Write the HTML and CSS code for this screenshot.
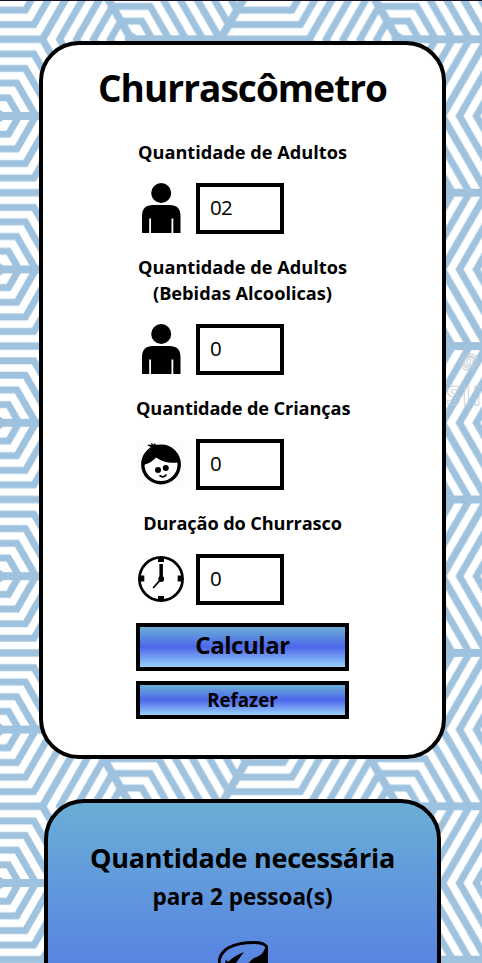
FILE: index.html
```
<!DOCTYPE html>
<html lang="pt-br">
<head>
<meta charset="utf-8">
<title>Churrascômetro</title>
<link rel="stylesheet" href="styles.css">
</head>
<body>
<svg class="backdrop" width="482" height="963" aria-hidden="true">
  <defs>
    <g id="cell" fill="none" stroke="#9fc3df">
      <g stroke-width="7">
        <path d="M88.7 0L44.3 76.7H-44.3L-88.7 0L-44.3 -76.7H44.3Z"/>
        <path d="M71.7 0L35.9 62.1H-35.9L-71.7 0L-35.9 -62.1H35.9Z"/>
        <path d="M54.8 0L27.4 47.5H-27.4L-54.8 0L-27.4 -47.5H27.4Z"/>
        <path d="M37.9 0L18.9 32.8H-18.9L-37.9 0L-18.9 -32.8H18.9Z"/>
        <path d="M21 0L10.5 18.2H-10.5L-21 0L-10.5 -18.2H10.5Z"/>
      </g>
      <path stroke-width="8" d="M0 0H88.7M0 0L-44.3 -76.7M0 0L-44.3 76.7"/>
      <circle r="6.5" fill="#9fc3df" stroke="none"/>
    </g>
    <pattern id="hex" width="266.6" height="153.4" patternUnits="userSpaceOnUse" patternTransform="translate(-2 116)">
      <use href="#cell"/>
      <use href="#cell" y="153.4"/>
      <use href="#cell" x="266.6"/>
      <use href="#cell" x="266.6" y="153.4"/>
      <use href="#cell" x="133.3" y="76.7"/>
      <use href="#cell" x="133.3" y="-76.7"/>
      <use href="#cell" x="133.3" y="230.1"/>
    </pattern>
  </defs>
  <rect width="482" height="963" fill="#fff"/>
  <rect width="482" height="963" fill="url(#hex)"/>
  <g class="watermark">
    <text x="459" y="369" font-size="22">@</text>
    <text x="446" y="405" font-size="26" textLength="35">SII</text>
  </g>
  <rect width="482" height="1" fill="#1b1020"/>
</svg>

<main class="page">
  <section class="card form-card">
    <h1>Churrascômetro</h1>
    <form class="form">
      <label>Quantidade de Adultos</label>
      <div class="row">
        <svg class="icon" viewBox="0 0 50 50"><use href="#person"/></svg>
        <input type="text" value="02">
      </div>
      <label>Quantidade de Adultos<br>(Bebidas Alcoolicas)</label>
      <div class="row">
        <svg class="icon" viewBox="0 0 50 50">
          <g id="person">
            <circle cx="25.2" cy="10" r="10"/>
            <path d="M6 50V33Q6 22 17 22H33.500Q44.500 22 44.500 33V50H37.300V35.500H35.500V50H15V35.500H13.200V50Z"/>
          </g>
        </svg>
        <input type="text" value="0">
      </div>
      <label class="tight">Quantidade de Crianças</label>
      <div class="row">
        <svg class="icon" viewBox="0 0 50 50">
          <rect x="1" y="1" width="48" height="48" fill="#fcfcfc"/>
          <circle cx="25" cy="25.500" r="18.200" fill="#fff" stroke="#000" stroke-width="3.400"/>
          <path d="M6 27Q6 13 15 8.500Q13 6.500 11 6.500Q13 5 15.500 6L15 4Q17 4.500 18 6L18.500 4Q20 6 21.500 6.500Q35 4 41.500 15Q44 20 43.500 23Q31 26 20 18.500Q15 24 9 25.500Z"/>
          <circle cx="22" cy="31" r="3"/><circle cx="29.800" cy="29" r="3"/>
          <path d="M23.500 36.500Q27.500 39.500 30.500 35.500" fill="none" stroke="#000" stroke-width="1.600"/>
        </svg>
        <input type="text" value="0">
      </div>
      <label class="tight">Duração do Churrasco</label>
      <div class="row">
        <svg class="icon" viewBox="0 0 50 50">
          <circle cx="25" cy="25" r="21.600" fill="none" stroke="#000" stroke-width="2.700"/>
          <path d="M22 4h6v4h-6zM22 42h6v4h-6zM4 21.500h4.300v6H4zM41.700 21.500H46v6h-4.300zM23.400 10h3.500v13h-3.500z"/>
          <circle cx="25.200" cy="25" r="2.900"/>
          <path d="M25 25L17.200 34" stroke="#000" stroke-width="1.900"/>
        </svg>
        <input type="text" value="0">
      </div>
      <button type="button" class="calc">Calcular</button>
      <button type="button" class="reset">Refazer</button>
    </form>
  </section>

  <section class="card result-card">
    <h2>Quantidade necessária</h2>
    <h3>para 2 pessoa(s)</h3>
    <svg class="meat" width="50" height="50" viewBox="0 0 50 50">
      <path d="M1.500 27Q-1 14 10 7Q20 1.500 36 1.500Q46 1.500 48.700 6V13Q38 17 31 26" fill="none" stroke="#000" stroke-width="3"/>
      <path d="M50 4V28H28Q29 22 36 17Q45 14 46 9Z"/>
      <path d="M6 27L8 18.500L10 21Q16 15 26 11Q19 20 15 27Z"/>
    </svg>
  </section>
</main>
</body>
</html>
```
FILE: styles.css
```
* { box-sizing: border-box; }

body {
  margin: 0;
  height: 963px;
  overflow: hidden;
  font-family: "Open Sans", "Noto Sans", sans-serif;
  color: #000;
}

.backdrop {
  position: absolute;
  inset: 0;
  z-index: -1;
}

.watermark text {
  font-family: "Open Sans", sans-serif;
  font-weight: 700;
  fill: none;
  stroke: #c3ccd4;
  stroke-width: 0.8;
}

.page {
  display: flex;
  flex-direction: column;
  height: 963px;
  overflow: hidden;
  padding: 41px 36px 0 39px;
}

.card {
  flex: none;
  display: flex;
  flex-direction: column;
  align-items: center;
  border: 4px solid #000;
  border-radius: 40px;
  background: #fff;
}

.form-card { height: 718px; padding-top: 18px; }

h1, h2, h3 { margin: 0; white-space: nowrap; font-weight: 700; }

h1 { font-size: 37px; line-height: 50px; letter-spacing: -0.95px; }

.form {
  display: flex;
  flex-direction: column;
  width: 213px;
  margin-top: 26px;
}

label {
  display: block;
  margin-bottom: 18px;
  font-size: 18.2px;
  font-weight: 700;
  line-height: 26px;
  text-align: center;
  white-space: nowrap;
}

.tight { letter-spacing: -0.12px; }

.row {
  display: flex;
  gap: 10px;
  height: 51px;
  margin-bottom: 20px;
}

.icon { width: 50px; height: 50px; }

input {
  width: 88px;
  height: 51px;
  padding: 0 10px 3px;
  border: 4px solid #000;
  border-radius: 0;
  background: #fff;
  color: #000;
  font-family: inherit;
  font-size: 20.5px;
  letter-spacing: -0.7px;
}

button {
  padding: 0;
  border: 4px solid #000;
  background: linear-gradient(#6aaed6, #4c67ea 50%, #98d0fa);
  color: #000;
  font-family: inherit;
  font-weight: 700;
}

.calc { height: 48px; margin-top: -2px; padding-bottom: 6px; font-size: 24px; letter-spacing: -0.45px; }
.reset { height: 38px; margin-top: 10px; padding-bottom: 2px; font-size: 18.7px; }

.result-card {
  height: 560px;
  margin: 40px 5px 0;
  padding-top: 35px;
  background: linear-gradient(#6aaed6, #4c67ea 50%, #98d0fa);
}

h2 { font-size: 27px; line-height: 39px; letter-spacing: -0.25px; }
h3 { font-size: 22.5px; line-height: 40px; }
.meat { margin-top: 24px; }
```
